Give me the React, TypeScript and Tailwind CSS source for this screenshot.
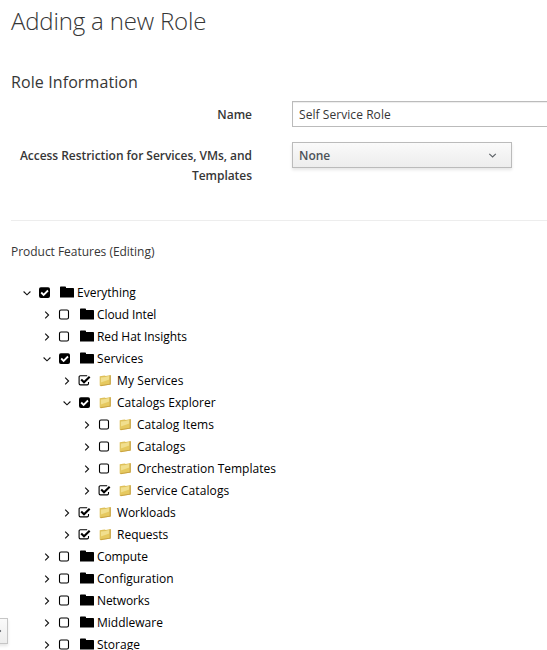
import React from 'react';

type Check = 'off' | 'on' | 'filled';
type Item = { label: string; depth: number; open?: boolean; check: Check; yellow?: boolean; spacing?: string };

const items: Item[] = [
  { label: 'Everything', depth: 0, open: true, check: 'filled' },
  { label: 'Cloud Intel', depth: 1, check: 'off', spacing: 'tracking-[-0.1px]' },
  { label: 'Red Hat Insights', depth: 1, check: 'off', spacing: 'tracking-[-0.06px]' },
  { label: 'Services', depth: 1, open: true, check: 'filled', spacing: 'tracking-[0.12px]' },
  { label: 'My Services', depth: 2, check: 'on', yellow: true, spacing: 'tracking-[0.1px]' },
  { label: 'Catalogs Explorer', depth: 2, open: true, check: 'filled', yellow: true, spacing: 'tracking-[0.05px]' },
  { label: 'Catalog Items', depth: 3, check: 'off', yellow: true, spacing: 'tracking-[0.05px]' },
  { label: 'Catalogs', depth: 3, check: 'off', yellow: true, spacing: 'tracking-[0.1px]' },
  { label: 'Orchestration Templates', depth: 3, check: 'off', yellow: true },
  { label: 'Service Catalogs', depth: 3, check: 'on', yellow: true, spacing: 'tracking-[0.12px]' },
  { label: 'Workloads', depth: 2, check: 'on', yellow: true, spacing: 'tracking-[-0.1px]' },
  { label: 'Requests', depth: 2, check: 'on', yellow: true },
  { label: 'Compute', depth: 1, check: 'off', spacing: 'tracking-[-0.1px]' },
  { label: 'Configuration', depth: 1, check: 'off' },
  { label: 'Networks', depth: 1, check: 'off', spacing: 'tracking-[-0.1px]' },
  { label: 'Middleware', depth: 1, check: 'off' },
  { label: 'Storage', depth: 1, check: 'off' },
];

const indents = ['pl-[23px]', 'pl-[43px]', 'pl-[63px]', 'pl-[83px]'];

function Chevron({ open }: { open?: boolean }) {
  return (
    <svg width="8" height="12" viewBox="0 0 8 12" fill="none" stroke="#111" strokeWidth="1.1" className="shrink-0">
      {open ? <path d="M.6 4.5 4 7.8 7.4 4.5" /> : <path d="M2.2 2.6 5.6 6 2.2 9.4" />}
    </svg>
  );
}

function Box({ check }: { check: Check }) {
  return (
    <svg width="12" height="12" viewBox="0 0 12 12" fill="none" className="shrink-0 overflow-visible">
      {check === 'filled' && (
        <>
          <rect x="0" y=".3" width="11" height="10.7" rx="1.9" fill="#000" />
          <path d="M2.2 5.5 4.6 7.9 9 3.5" stroke="#fff" strokeWidth="1.8" />
        </>
      )}
      {check === 'off' && <rect x=".5" y="1" width="9" height="9" rx="1.5" stroke="#000" strokeWidth="1.1" />}
      {check === 'on' && (
        <>
          <path d="M8.2 .8H1.4A1.3 1.3 0 0 0 .1 2.1v6.5a1.3 1.3 0 0 0 1.3 1.3h6.8a1.3 1.3 0 0 0 1.3-1.3V7" stroke="#000" strokeWidth="1.1" />
          <path d="M2.2 4.6 5 7.3 10.7 1.7" stroke="#000" strokeWidth="2.1" />
        </>
      )}
    </svg>
  );
}

function Folder({ yellow }: { yellow?: boolean }) {
  if (yellow) {
    return (
      <svg width="13" height="12" viewBox="0 0 13 12" className="mr-1 shrink-0 overflow-visible">
        <path d="M-.3 1.2 4.6.6 5.8 1.1 10.6 0V9.6L1 11.2-.3 10.6Z" fill="#dec05a" />
        <path d="M.8 2.6 5.8 2 6.8 1.5 9.4 1V8.8L.8 10.2Z" fill="#f1df8e" />
        <path d="M.8 7.4 9.4 4.5V8.8L.8 10.2Z" fill="#e6c95f" />
        <path d="M9.7.6 10.7.2V9.4L9.7 9.7Z" fill="#c39b38" />
        <path d="M.4 10.6 9.9 9.2" stroke="#bd9433" strokeWidth=".7" />
      </svg>
    );
  }
  return (
    <svg width="14" height="12" viewBox="0 0 14 12" className="mr-[3px] shrink-0 overflow-visible">
      <path d="M0 .3Q0-.5.7-.5H5.2Q6-.5 6 .3V1H13.2Q14 1 14 1.8V10.5H0Z" fill="#000" />
    </svg>
  );
}

export default function App() {
  return (
    <main className="relative h-[650px] w-full overflow-hidden bg-white font-['Open_Sans',sans-serif] text-xs text-[#363636]">
      <h1 className="ml-[11px] h-[71px] pt-1 text-2xl font-light leading-[33px] tracking-[-0.17px]">Adding a new Role</h1>
      <h2 className="ml-[11px] h-[30px] text-base leading-[22px] tracking-[0.1px]">Role Information</h2>
      <div className="flex h-[41px] items-start">
        <label className="w-[252px] shrink-0 pt-1 text-right font-semibold leading-5">Name</label>
        <div className="ml-10 h-[26px] w-[400px] shrink-0 border border-[#bbb] pl-1.5 leading-[25px] tracking-[0.06px] shadow-[inset_0_1px_1px_rgba(3,3,3,0.075)]">
          Self Service Role
        </div>
      </div>
      <div className="flex h-[78px] items-start">
        <label className="w-[252px] shrink-0 pl-2 pt-1 text-right font-semibold leading-5 tracking-[-0.04px]">
          Access Restriction for Services, VMs, and Templates
        </label>
        <button className="ml-10 flex h-[26px] w-[220px] items-center justify-between border border-[#bbb] bg-linear-to-b from-[#fafafa] to-[#ededed] pl-1.5 pr-[14px] font-semibold text-[#4d5258] shadow-[0_2px_3px_rgba(3,3,3,0.1)]">
          <span className="pt-px leading-6">None</span>
          <svg width="9" height="8" viewBox="0 0 9 8" fill="none" stroke="#5c6166" strokeWidth="1.1">
            <path d="M1.3 2.8 4.6 6 7.8 2.8" />
          </svg>
        </button>
      </div>
      <hr className="ml-[11px] border-[#ededed]" />
      <h3 className="ml-[11px] mt-[21px] h-10 leading-5 tracking-[-0.03px]">Product Features (Editing)</h3>
      <ul className="text-black">
        {items.map((item) => (
          <li key={item.label} className={`flex h-[22px] items-center ${indents[item.depth]}`}>
            <Chevron open={item.open} />
            <span className="ml-2 mr-[9px] flex">
              <Box check={item.check} />
            </span>
            <Folder yellow={item.yellow} />
            <span className={`leading-5 ${item.spacing ?? ''}`}>{item.label}</span>
          </li>
        ))}
      </ul>
      <button className="absolute -left-4 top-[618px] flex h-[26px] w-6 items-center justify-center border border-[#c6c6c6] bg-linear-to-b from-[#fafafa] to-[#ededed] shadow-[0_2px_3px_rgba(3,3,3,0.1)]">
        <svg width="9" height="8" viewBox="0 0 9 8" fill="none" stroke="#4d5258" strokeWidth="1.2" className="ml-1.5">
          <path d="M2.5 1 5.5 4 2.5 7" />
        </svg>
      </button>
    </main>
  );
}
